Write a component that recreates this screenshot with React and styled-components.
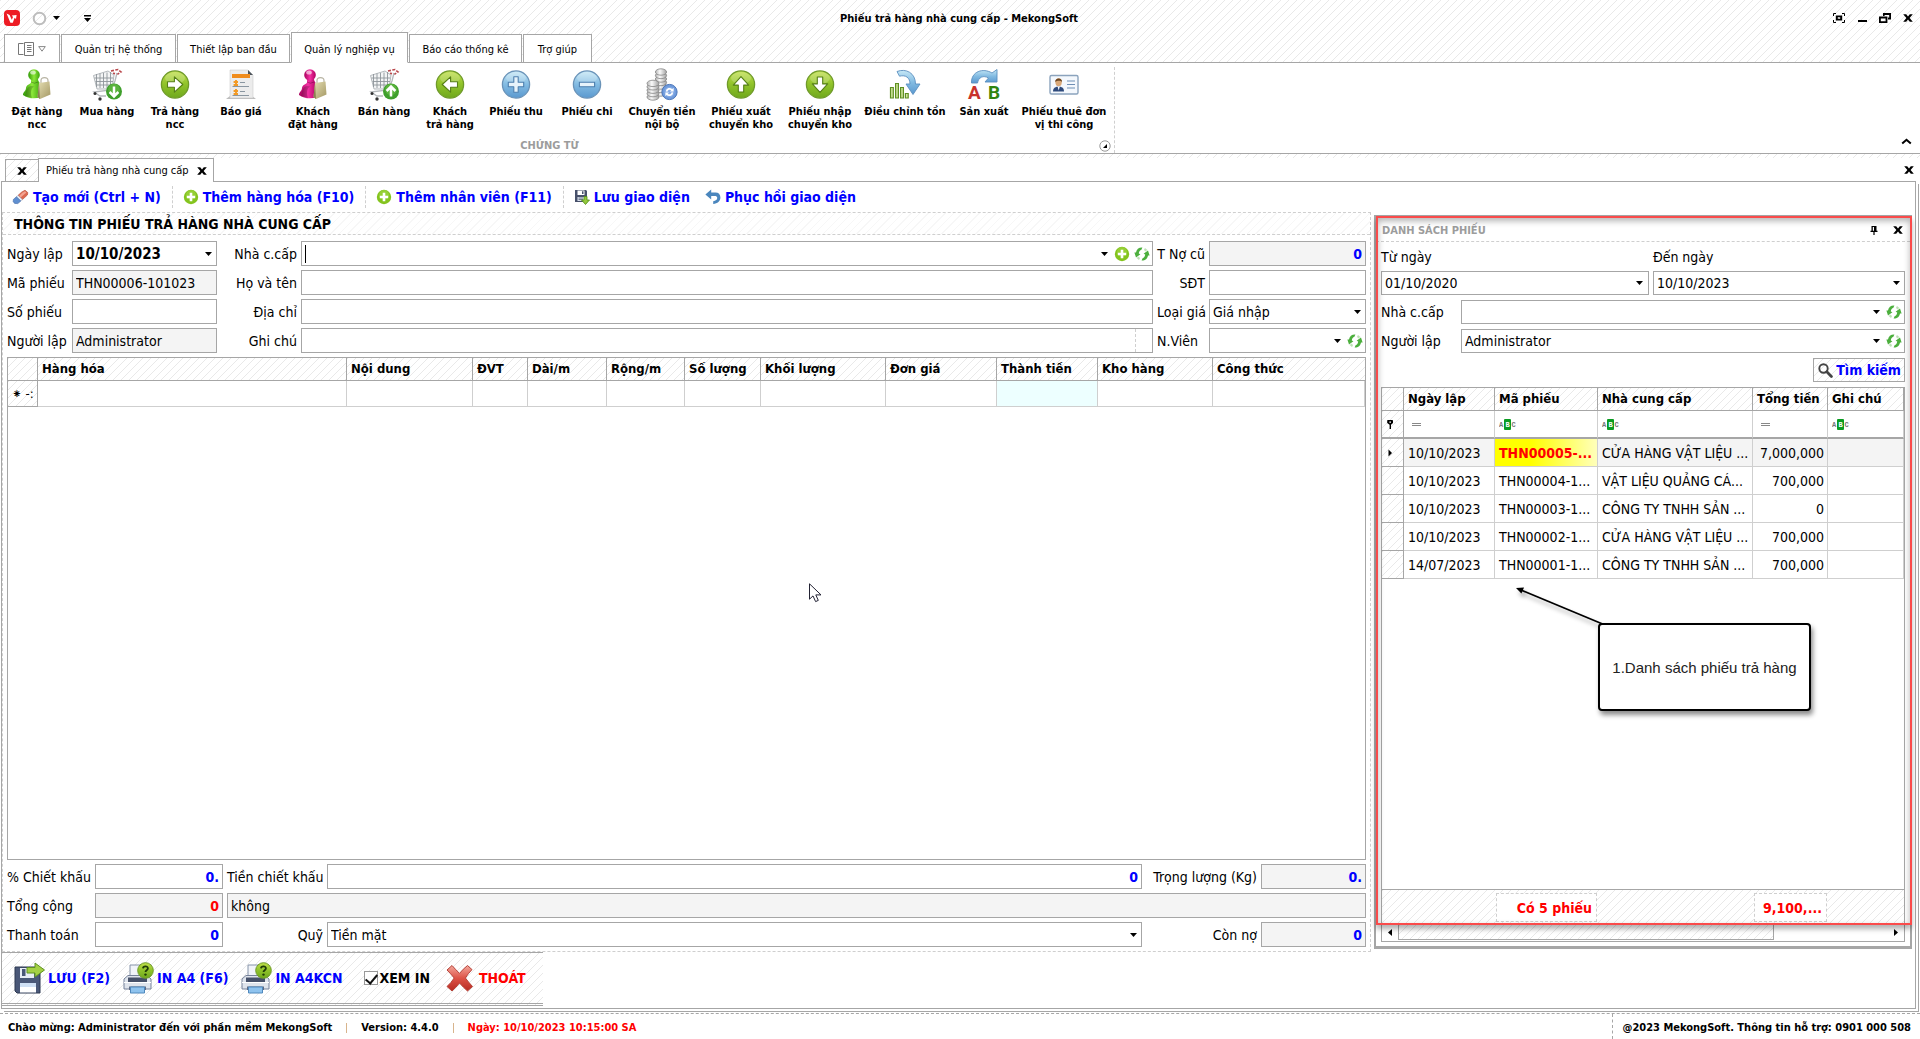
import React from 'react';
import styled, { createGlobalStyle, css } from 'styled-components';

const line = '#a6a6a6';
const soft = '#cfcfcf';
const sans = '"DejaVu Sans Condensed", "Noto Sans", sans-serif';

const hatch = css`
  background-color: #fff;
  background-image: linear-gradient(
    135deg,
    #e9e9e9 0 6.25%,
    transparent 6.25% 50%,
    #e9e9e9 50% 56.25%,
    transparent 56.25%
  );
  background-size: 8px 8px;
`;

const Global = createGlobalStyle`
  * { box-sizing: border-box; }
  body { margin: 0; background: #fff; font-family: ${sans}; font-size: 14px; color: #000; }
  button, input, select { font: inherit; color: inherit; margin: 0; }
  button { background: none; border: 0; padding: 0; cursor: pointer; }
  h1, h2 { margin: 0; }
`;

/* ---------- shell ---------- */

const Page = styled.div`
  min-height: 100vh;
  display: flex;
  flex-direction: column;
`;

const Top = styled.header`
  ${hatch}
  height: 63px;
  display: flex;
  flex-direction: column;
  justify-content: space-between;
  border-bottom: 1px solid ${line};
`;

const TitleBar = styled.div`
  display: grid;
  grid-template-columns: 1fr auto 1fr;
  align-items: center;
  height: 32px;
  padding: 4px 6px 0 4px;
`;

const AppTitle = styled.h1`
  font-size: 11px;
  font-weight: 700;
`;

const QuickBar = styled.div`
  display: flex;
  align-items: center;
  gap: 4px;
`;

const QuickMore = styled.button`
  margin-left: 20px;
  display: flex;
`;

const Round = styled.button`
  display: flex;
  align-items: center;
  gap: 6px;
  margin-left: 8px;
`;

const WindowButtons = styled.div`
  display: flex;
  justify-content: flex-end;
  gap: 11px;
  button { display: flex; }
`;

const Tabs = styled.nav`
  display: flex;
  align-items: flex-end;
  gap: 1px;
  padding-left: 4px;
  margin-bottom: -1px;
`;

const Tab = styled.button`
  height: ${(p) => (p.$active ? 31 : 29)}px;
  width: ${(p) => p.$w}px;
  padding-top: ${(p) => (p.$active ? 3 : 1)}px;
  border: 1px solid ${line};
  border-bottom-color: ${(p) => (p.$active ? '#fff' : line)};
  background: #fff;
  font-size: 11px;
  white-space: nowrap;
  display: flex;
  align-items: center;
  justify-content: center;
  gap: 3px;
`;

const Ribbon = styled.section`
  height: 91px;
  display: flex;
  justify-content: space-between;
  align-items: stretch;
  border-bottom: 1px solid ${line};
`;

const RibbonGroup = styled.div`
  width: 1115px;
  display: flex;
  flex-direction: column;
  justify-content: space-between;
  border-right: 1px dashed ${soft};
  margin-top: 4px;
`;

const RibbonItems = styled.div`
  display: flex;
  padding-left: 2px;
`;

const RibbonButton = styled.button`
  width: ${(p) => p.$w}px;
  display: flex;
  flex-direction: column;
  align-items: center;
  font-size: 11px;
  font-weight: 700;
  line-height: 13px;
  white-space: pre;
  gap: 4px;
  svg { width: 32px; height: 34px; overflow: visible; }
`;

const GroupFoot = styled.div`
  display: flex;
  align-items: center;
  padding: 0 3px 1px 0;
  font-size: 11px;
  font-weight: 700;
  color: #9c9c9c;
  span { flex: 1; text-align: center; }
  button { display: flex; }
`;

const Collapse = styled.button`
  align-self: flex-end;
  padding: 0 8px 8px;
  display: flex;
`;

const Strip = styled.div`
  ${hatch}
  height: 4px;
`;

const DocTabs = styled.div`
  display: flex;
  align-items: flex-end;
  height: 23px;
  padding: 0 5px;
`;

const DocTab = styled.div`
  ${(p) => p.$plain && hatch}
  height: ${(p) => (p.$plain ? 22 : 24)}px;
  display: flex;
  align-items: center;
  gap: 7px;
  padding: 0 ${(p) => (p.$plain ? 10 : 5)}px 0 ${(p) => (p.$plain ? 10 : 7)}px;
  border: 1px solid ${line};
  border-bottom: 0;
  font-size: 11px;
  background-color: #fff;
  z-index: 1;
  margin-bottom: ${(p) => (p.$plain ? 0 : -1)}px;
  & + & { margin-left: -1px; }
  button { display: flex; }
`;

const DocClose = styled.button`
  margin: 0 0 6px auto;
  display: flex;
`;

const Frame = styled.main`
  flex: 1;
  display: flex;
  flex-direction: column;
  margin: 0 4px 4px 1px;
  border: 1px solid ${line};
  padding-bottom: 2px;
  box-shadow: 2px 2px 0 #fff, 3px 3px 0 ${line};
`;

const Toolbar = styled.div`
  height: 30px;
  display: flex;
  align-items: center;
`;

const ToolButton = styled.button`
  display: flex;
  align-items: center;
  gap: 4px;
  height: 22px;
  padding: 0 ${(p) => (p.$sep ? 11 : 5)}px 0 10px;
  color: #00f;
  font-weight: 700;
  white-space: nowrap;
  border-right: ${(p) => (p.$sep ? `1px dashed ${soft}` : '0')};
`;

const Columns = styled.div`
  flex: 1;
  display: flex;
`;

/* ---------- voucher form ---------- */

const Voucher = styled.section`
  flex: 1;
  min-width: 0;
  display: flex;
  flex-direction: column;
  border: 1px dashed ${soft};
`;

const VoucherTitle = styled.h2`
  height: 22px;
  padding-left: 11px;
  font-size: 14px;
  line-height: 22px;
  font-weight: 700;
  border-bottom: 1px dashed ${soft};
  background: repeating-linear-gradient(135deg, #f7f7f7 0 1px, #fff 1px 6px);
`;

const VoucherBody = styled.div`
  flex: 1;
  display: flex;
  flex-direction: column;
  gap: 4px;
  padding: 6px 4px 4px;
`;

const FormGrid = styled.div`
  display: grid;
  grid-template-columns: 61px 145px 76px 1fr 48px 157px;
  gap: 4px;
`;

const TotalsGrid = styled.div`
  display: grid;
  grid-template-columns: 84px 128px 96px 1fr 111px 105px;
  gap: 4px;
`;

const Label = styled.label`
  align-self: center;
  line-height: 18px;
  white-space: nowrap;
  text-align: ${(p) => (p.$right ? 'right' : 'left')};
`;

const Box = styled.div`
  position: relative;
  display: flex;
  align-items: center;
  height: ${(p) => (p.$low ? 24 : 25)}px;
  min-width: 0;
  border: 1px solid ${line};
  background: ${(p) => (p.$off ? '#f4f4f4' : '#fff')};
  grid-column: ${(p) => (p.$wide ? 'span 4' : 'auto')};
  button { display: flex; margin-right: 4px; }
  button:last-child { margin-right: 2px; }
`;

const Input = styled.input`
  flex: 1;
  width: 0;
  min-width: 0;
  height: 100%;
  border: 0;
  padding: 0 3px;
  outline: 0;
  background: transparent;
  line-height: 18px;
  font-size: ${(p) => (p.$big ? 15 : 14)}px;
  font-weight: ${(p) => (p.$bold ? 700 : 400)};
  color: ${(p) => p.$color || '#000'};
  text-align: ${(p) => (p.$num ? 'right' : 'left')};
`;

const Select = styled.select`
  flex: 1;
  width: 0;
  height: 100%;
  border: 0;
  outline: 0;
  padding: 0 3px;
  background: transparent;
  appearance: none;
`;

const Drop = styled.span`
  display: flex;
  width: 16px;
  justify-content: center;
  pointer-events: none;
  &:not(:last-child) { width: 20px; }
`;

const TextCaret = styled.span`
  width: 1px;
  height: 18px;
  margin-left: 3px;
  background: #000;
`;

const SideRule = styled.span`
  align-self: stretch;
  width: 17px;
  border-left: 1px dashed ${soft};
`;

/* ---------- tables ---------- */

const Sheet = styled.div`
  position: relative;
  flex: 1;
  display: flex;
  flex-direction: column;
  border: 1px solid ${line};
  background: #fff;
`;

const Table = styled.table`
  width: 100%;
  table-layout: fixed;
  border-collapse: separate;
  border-spacing: 0;
`;

const Th = styled.th`
  ${hatch}
  height: 23px;
  padding: 0 0 0 4px;
  text-align: left;
  font-size: 13px;
  font-weight: 700;
  line-height: 18px;
  white-space: nowrap;
  overflow: hidden;
  border-right: 1px solid ${line};
  border-bottom: 1px solid ${line};
  &:last-child { border-right: ${(p) => (p.$end ? `1px solid ${line}` : '0')}; }
`;

const RowHead = styled.th`
  ${hatch}
  padding: 0 0 0 4px;
  font-size: 13px;
  font-weight: 400;
  text-align: left;
  white-space: nowrap;
  overflow: hidden;
  border-right: 1px solid ${line};
  border-bottom: ${(p) => (p.$heavy ? 2 : 1)}px solid ${line};
`;

const Td = styled.td`
  height: ${(p) => p.$h || 28}px;
  padding: 0 3px 0 4px;
  overflow: hidden;
  white-space: nowrap;
  text-align: ${(p) => (p.$num ? 'right' : 'left')};
  border-right: 1px solid ${soft};
  border-bottom: ${(p) => (p.$heavy ? `2px solid ${line}` : `1px solid ${soft}`)};
  background: ${(p) => p.$bg || 'transparent'};
  color: ${(p) => (p.$hot ? '#f00' : '#000')};
  font-weight: ${(p) => (p.$hot ? 700 : 400)};
  svg { display: block; }
`;

const Pointer = styled.svg`
  position: absolute;
  left: 59%;
  top: 225px;
`;

/* ---------- bottom actions ---------- */

const Actions = styled.div`
  ${hatch}
  width: 541px;
  height: 54px;
  display: flex;
  align-items: center;
  padding: 0 0 0 11px;
  font-weight: 700;
  border-top: 1px solid ${line};
  border-bottom: 3px double ${line};
`;

const ActionButton = styled.button`
  display: flex;
  align-items: center;
  gap: 3px;
  padding-right: 12px;
  font-weight: 700;
  white-space: nowrap;
  color: ${(p) => p.$color || '#00f'};
  svg { width: 32px; height: 32px; }
`;

const Check = styled.label`
  display: flex;
  align-items: center;
  gap: 1px;
  padding: 0 14px 0 10px;
  white-space: nowrap;
`;

const Tick = styled.input`
  appearance: none;
  flex: none;
  width: 14px;
  height: 14px;
  margin: 0;
  border: 1px solid #999;
  background: #fff;
  display: grid;
  place-items: center;
  &:checked::before {
    content: '';
    width: 5px;
    height: 10px;
    border: solid #111;
    border-width: 0 2px 2px 0;
    transform: rotate(40deg);
  }
`;

/* ---------- voucher list ---------- */

const Panel = styled.aside`
  position: relative;
  width: 538px;
  flex: none;
  display: flex;
  flex-direction: column;
  margin: 3px;
  border: solid ${line};
  border-width: 1px 2px 3px 2px;
`;

const Highlight = styled.div`
  position: absolute;
  inset: 0 -2px 21px 0;
  border: 2px solid #fa4b4b;
  box-shadow: inset 0 3px 6px rgba(0, 0, 0, 0.3), 0 4px 5px rgba(0, 0, 0, 0.3);
  pointer-events: none;
`;

const PanelHead = styled.div`
  height: 26px;
  display: flex;
  align-items: center;
  padding: 3px 6px 0 6px;
  border-bottom: 1px dashed ${soft};
  h2 { flex: 1; font-size: 11px; color: #9c9c9c; }
  button { display: flex; margin-left: 14px; }
`;

const PanelBody = styled.div`
  flex: 1;
  display: flex;
  flex-direction: column;
  gap: 5px;
  padding: 0 5px 4px;
`;

const Dates = styled.div`
  display: grid;
  grid-template-columns: 17fr 16fr;
  column-gap: 4px;
  label { height: 29px; line-height: 31px; }
`;

const FilterLine = styled.div`
  display: grid;
  grid-template-columns: 80px 1fr;
`;

const SearchButton = styled.button`
  ${hatch}
  align-self: flex-end;
  display: flex;
  align-items: center;
  gap: 3px;
  height: 24px;
  padding: 0 3px 0 4px;
  border: 1px solid ${line};
  color: #00f;
  font-weight: 700;
`;

const SheetSpace = styled.div`
  flex: 1;
`;

const Summary = styled.div`
  ${hatch}
  height: 35px;
  display: grid;
  grid-template-columns: 114px 101px 157px 73px;
  align-items: center;
  border-top: 1px solid ${line};
  color: #f00;
  font-weight: 700;
`;

const SumCell = styled.div`
  grid-column: ${(p) => p.$col};
  height: 29px;
  line-height: 29px;
  padding-right: 4px;
  text-align: right;
  white-space: nowrap;
  background: #fff;
  border: 1px dashed ${soft};
`;

const Scroll = styled.div`
  height: 17px;
  display: flex;
  align-items: center;
  padding: 0 4px;
  gap: 4px;
  button { display: flex; width: 8px; justify-content: center; }
`;

const Thumb = styled.div`
  ${hatch}
  flex: 0 0 376px;
  height: 15px;
  margin-right: auto;
  border: 1px solid ${line};
  border-top: 0;
`;

const Callout = styled.div`
  position: absolute;
  left: 216px;
  top: 235px;
  width: 213px;
  height: 88px;
  display: grid;
  place-items: center;
  border: 2px solid #000;
  border-radius: 4px;
  background: #fff;
  font: 15px 'Liberation Sans', Arial, sans-serif;
  color: #222;
  white-space: nowrap;
  box-shadow: 2px 4px 5px rgba(0, 0, 0, 0.45);
`;

const CalloutArrow = styled.svg`
  position: absolute;
  left: 133px;
  top: 197px;
  filter: drop-shadow(2px 4px 2px rgba(0, 0, 0, 0.35));
`;

const Status = styled.footer`
  height: 26px;
  display: flex;
  justify-content: space-between;
  border-top: 1px dashed ${line};
  font-size: 11px;
  font-weight: 700;
  line-height: 28px;
  white-space: nowrap;
`;

const StatusLeft = styled.div`
  display: flex;
  padding-left: 8px;
  gap: 14px;
`;

const Bar = styled.span`
  width: 1px;
  height: 10px;
  margin-top: 9px;
  background: #d8b48c;
`;

const Red = styled.span`
  color: #f00;
`;

const StatusRight = styled.div`
  padding: 0 9px 0 10px;
  border-left: 1px dashed ${line};
`;

/* ---------- drawings ---------- */

const Down = () => (
  <svg width="7" height="4" viewBox="0 0 7 4" aria-hidden="true"><path d="M0 0H7L3.5 4Z" /></svg>
);
const Cross = () => (
  <svg width="12" height="10" viewBox="0 0 12 10" aria-hidden="true">
    <path d="M1.2 1.2H4.2L6 3.5 7.8 1.2H10.8L7.6 5 10.8 8.8H7.8L6 6.5 4.2 8.8H1.2L4.4 5Z" />
  </svg>
);
const Refresh = () => (
  <svg width="16" height="16" viewBox="0 0 16 16" aria-hidden="true" fill="#4caf3d">
    <path d="M8.4 1.6C5 1.4 2.4 3.4 2 6.6L.4 6.4 2 11.6 6.4 8.2 4.8 7.4C5 5.4 6 4.2 7.4 3.8Z" />
    <path d="M7.6 14.4C11 14.6 13.6 12.6 14 9.4L15.6 9.6 14 4.4 9.6 7.8 11.2 8.6C11 10.6 10 11.8 8.6 12.2Z" />
    <path d="M2.6 12L4.8 10.6 6 12.2 5 14ZM13.4 4L11.2 5.4 10 3.8 11 2Z" fill="#7cc46c" opacity=".5" />
  </svg>
);
const Plus = () => (
  <svg width="16" height="16" viewBox="0 0 16 16" aria-hidden="true">
    <circle cx="8" cy="8" r="7.2" fill="#84c41e" />
    <circle cx="8" cy="6" r="5" fill="#a5d94a" opacity=".5" />
    <path d="M8 3.8V12.2M3.8 8H12.2" stroke="#fff" strokeWidth="2.6" />
  </svg>
);
const Eraser = () => (
  <svg width="17" height="16" viewBox="0 0 17 16" aria-hidden="true">
    <path d="M9.5 3.2L13 1.2 15.8 3.6 15.4 6 10.4 10.6 6 6.4Z" fill="#dd6a50" stroke="#b4452f" strokeWidth=".6" />
    <path d="M6 6.4L10.4 10.6 8.8 12 4.4 7.8Z" fill="#eef2f8" stroke="#8a9ab5" strokeWidth=".5" />
    <path d="M4.4 7.8L8.8 12 5.8 14.6 2.6 14.4 1.2 12.6 1.4 10.4Z" fill="#5f8fd0" stroke="#3f66a5" strokeWidth=".6" />
    <path d="M10.4 3.8L13 2.2 14.4 3.4 8.6 8.4 7.2 6.8Z" fill="#f9b8a8" opacity=".75" />
  </svg>
);
const SaveLayout = () => (
  <svg width="16" height="16" viewBox="0 0 16 16" aria-hidden="true">
    <path d="M1 1H12L13 2V13H1Z" fill="#47506a" />
    <path d="M3.5 1.5H10.5V6H3.5Z" fill="#fff" />
    <path d="M8 2.3H9.5V5H8Z" fill="#47506a" />
    <path d="M3.5 8H10V12H3.5Z" fill="#dfe6f2" />
    <path d="M4.5 9H9M4.5 10.6H9" stroke="#47506a" strokeWidth=".8" />
    <path d="M10 7.5H13V11H15.5L11.5 15.5 7.5 11H10Z" fill="#93c83d" stroke="#4f8b14" strokeWidth=".8" />
  </svg>
);
const Undo = () => (
  <svg width="16" height="16" viewBox="0 0 16 16" aria-hidden="true">
    <path d="M6.2 .4V3.6H10.5C13.6 3.6 15.4 5.6 15.4 8.5 15.4 12 12.6 14.6 8.2 15V12.2C10.8 11.9 12.2 10.6 12.2 9 12.2 7.6 11.2 7 9.6 7H6.2V10.4L.4 5.4Z" fill="#4a86bd" />
  </svg>
);
const Magnifier = () => (
  <svg width="15" height="15" viewBox="0 0 15 15" aria-hidden="true" fill="none" stroke="#444">
    <circle cx="5.5" cy="5.5" r="4.2" strokeWidth="1.9" />
    <path d="M8.8 8.8L13.4 13.4" strokeWidth="2.8" strokeLinecap="round" />
  </svg>
);

const Defs = () => (
  <svg width="0" height="0" aria-hidden="true" display="block">
    <defs>
      <linearGradient id="green" x1="0" y1="0" x2="0" y2="1">
        <stop offset="0" stopColor="#c0df4a" /><stop offset=".5" stopColor="#8fc22a" /><stop offset="1" stopColor="#6fa81c" />
      </linearGradient>
      <linearGradient id="blue" x1="0" y1="0" x2="0" y2="1">
        <stop offset="0" stopColor="#c6e8f6" /><stop offset=".5" stopColor="#82bbe2" /><stop offset="1" stopColor="#5a98cf" />
      </linearGradient>
      <linearGradient id="red" x1="0" y1="0" x2="0" y2="1">
        <stop offset="0" stopColor="#f3a79c" /><stop offset=".5" stopColor="#dd5347" /><stop offset="1" stopColor="#b72b22" />
      </linearGradient>
      <linearGradient id="lime" x1="0" y1="0" x2="1" y2="0">
        <stop offset="0" stopColor="#2f9a05" /><stop offset=".5" stopColor="#8de83a" /><stop offset="1" stopColor="#3da30c" />
      </linearGradient>
      <linearGradient id="pink" x1="0" y1="0" x2="1" y2="0">
        <stop offset="0" stopColor="#a8005c" /><stop offset=".5" stopColor="#f531a4" /><stop offset="1" stopColor="#b00060" />
      </linearGradient>
      <linearGradient id="steel" x1="0" y1="0" x2="1" y2="0">
        <stop offset="0" stopColor="#b4b4b4" /><stop offset=".4" stopColor="#fafafa" /><stop offset="1" stopColor="#a0a0a0" />
      </linearGradient>
      <linearGradient id="bag" x1="0" y1="0" x2="1" y2="1">
        <stop offset="0" stopColor="#e6dfb4" /><stop offset="1" stopColor="#a39763" />
      </linearGradient>
    </defs>
  </svg>
);

const I = ({ children }) => <svg viewBox="0 0 32 34" aria-hidden="true">{children}</svg>;

const Person = ({ fill }) => (
  <I>
    <path d="M10 12H17C17 15 20 16 20 20V30C14 32.4 7 31.5 2 28 2 25 5 24 5 21 5.4 18 9 17.4 10 15.6Z" fill={`url(#${fill})`} />
    <circle cx="13" cy="8" r="5.8" fill={`url(#${fill})`} />
    <path d="M5 24C6 20 10 18 13 19.6 10 21.4 9 26 11 31L4 29Z" fill="#000" opacity=".2" />
    <ellipse cx="12" cy="5.6" rx="2.8" ry="2" fill="#fff" opacity=".6" />
    <path d="M10 15Q13.5 17.4 17 15" fill="none" stroke="#000" opacity=".25" />
    <path d="M20 16V13.5C20 9.6 27 9.6 27 13.5V16" fill="none" stroke="#b8b4a4" strokeWidth="1.2" />
    <path d="M18 16L28.5 14.4 29.5 27.5 19 32 16.5 30Z" fill="url(#bag)" />
    <path d="M18 16L19 32 16.5 30Z" fill="#8b8152" />
  </I>
);
const Cart = ({ up }) => (
  <I>
    <path d="M20 4L27 2.5 30 5 27 7 22 6.4" fill="none" stroke="#b9474b" strokeWidth="1.6" strokeDasharray="3 1.4" />
    <path d="M2.5 8.5L17 4 23 8 21 22H6Z" fill="#f3f4f5" stroke="#b4b9bd" />
    <path d="M5.5 7V20M9 6.5V21M12.5 6V21M16 5.5V21M19.5 5V21M3.5 11H22M4.5 14.5H22M5.5 18H21.5" stroke="#8e959b" strokeWidth=".9" />
    <path d="M26 6L24 14 20 23 3 25 9 29H15" fill="none" stroke="#b4b8bb" strokeWidth="1.3" />
    <circle cx="4" cy="26.4" r="1.5" fill="#333" /><circle cx="9" cy="32" r="1.7" fill="#333" />
    <circle cx="23" cy="24.5" r="8" fill="#3f9f2c" /><circle cx="23" cy="22.5" r="5.8" fill="#7ccb52" opacity=".45" />
    <path d={up ? 'M23 29.5V20M18.6 24L23 19.6 27.4 24' : 'M23 19.5V29M18.6 25L23 29.4 27.4 25'} fill="none" stroke="#fff" strokeWidth="2.5" />
  </I>
);
const Disc = ({ fill, rotate = 0, kind = 'arrow' }) => (
  <I>
    <circle cx="16" cy="17.5" r="13.6" fill={`url(#${fill})`} stroke={fill === 'blue' ? '#6a93b8' : '#6f9a2a'} strokeWidth="1.3" />
    <ellipse cx="16" cy="11" rx="10" ry="6" fill="#fff" opacity=".2" />
    <g fill={kind === 'arrow' ? '#fff' : '#e6f3fb'} stroke={fill === 'blue' ? '#4d7fae' : '#557f16'} strokeWidth="1.1" strokeLinejoin="round" transform={`rotate(${rotate} 16 17.5)`}>
      {kind === 'arrow' && <path d="M8.5 14.8H15.4V9.8L23.8 17.5 15.4 25.2V20.2H8.5Z" />}
      {kind === 'plus' && <path d="M13.8 9.8H18.2V15.3H23.7V19.7H18.2V25.2H13.8V19.7H8.3V15.3H13.8Z" />}
      {kind === 'minus' && <path d="M8.4 15.3H23.6V19.7H8.4Z" />}
    </g>
  </I>
);
const Quote = () => (
  <I>
    <path d="M1 32H31L27 29H5Z" fill="#bdbdbd" />
    <path d="M5 3H23L28 8V31H5Z" fill="#ececec" stroke="#cfcfcf" strokeWidth=".6" />
    <path d="M23 3L28 8H23Z" fill="#4d545b" />
    <rect x="7" y="7" width="18" height="4" fill="#f08c1c" />
    <path d="M11 13V20M8.6 15H13M8.6 18H13M11 22V29M8.6 24H13M8.6 27H13" stroke="#f39a24" strokeWidth="1.9" />
    <path d="M15 15.5H20M7.5 19.5H24M15 24.5H20M7.5 28.5H24" stroke="#8a96a0" strokeWidth="1" />
  </I>
);
const Coins = () => (
  <I>
    {[26, 22.5, 19, 15.5, 12, 8.5, 5].map((y) => (
      <ellipse key={y} cx="15" cy={y} rx="5.6" ry="3.2" fill="url(#steel)" stroke="#858585" strokeWidth=".8" />
    ))}
    {[30, 26.6, 23.2, 19.8, 16.4].map((y) => (
      <ellipse key={y} cx="7" cy={y} rx="6" ry="3.2" fill="url(#steel)" stroke="#858585" strokeWidth=".8" />
    ))}
    <circle cx="23.5" cy="25" r="7.6" fill="#6f9bdc" stroke="#4a74b8" />
    <circle cx="23.5" cy="25" r="5.2" fill="#86abe4" />
    <path d="M20.6 24.6C20.8 21.8 24.4 20.8 26 23M26.4 25.4C26.2 28.2 22.6 29.2 21 27" fill="none" stroke="#fff" strokeWidth="1.7" />
    <path d="M27.6 20.8V24.4H24ZM19.4 29.2V25.6H23Z" fill="#fff" />
  </I>
);
const Adjust = () => (
  <I>
    <path d="M1.5 20.5H4.3V31H1.5ZM6.6 16.5H9.4V31H6.6ZM11.6 20.5H14.4V31H11.6ZM16.4 26.5H19.2V31H16.4Z" fill="#cfe59a" stroke="#5f8f22" strokeWidth="1.2" />
    <path d="M8 4.5C17 1 26.5 6 26.5 17H31L24 27.5 17 17H21C21 10.5 16.5 7.6 10.5 9.2Z" fill="url(#blue)" stroke="#5a8fc0" strokeWidth=".9" />
  </I>
);
const Letter = styled.text`
  font: 700 19px Roboto, sans-serif;
`;
const Produce = () => (
  <I>
    <path d="M3.5 16C3 4.5 15 .5 24 6L29 2.5V15H17L20.5 11C15.5 8 10.5 10 9.5 16Z" fill="url(#blue)" stroke="#5a8fc0" strokeWidth=".9" />
    <Letter x="0" y="32" fill="#c8322c">A</Letter>
    <Letter x="20" y="32" fill="#2f8410">B</Letter>
  </I>
);
const IdCard = () => (
  <I>
    <rect x="2" y="8.5" width="28" height="18.5" rx="1.5" fill="#f4f8fd" stroke="#8ba3bd" strokeWidth="1.4" />
    <path d="M5 24.5C5 20.5 8 19.8 10.5 19.5 13.5 19.8 16 20.5 16 24.5Z" fill="#2e4a7c" />
    <path d="M9.6 19.5H11.8L10.7 23.6Z" fill="#fff" />
    <ellipse cx="10.6" cy="15.2" rx="3.2" ry="3.9" fill="#d9a878" />
    <path d="M7.2 15C6.6 10.4 14.6 10 14 15 13 13.4 9.4 13 7.2 15Z" fill="#6b4520" />
    <path d="M19 14H27M19 17.5H27M19 21H27" stroke="#6f8fb5" strokeWidth="1.2" />
  </I>
);

const Floppy = () => (
  <svg viewBox="0 0 32 32" aria-hidden="true">
    <path d="M2 5H25L27 7V31H4L2 29Z" fill="#4a5878" stroke="#2d3850" />
    <rect x="7" y="6" width="14" height="10" fill="#e8edf5" />
    <rect x="9" y="7" width="3.5" height="7" fill="#4a5878" />
    <rect x="7" y="21" width="16" height="9.5" fill="#fff" /><rect x="7" y="21" width="16" height="4" fill="#cfe0f4" />
    <path d="M14 5.5H22V1L31.5 8 22 15V11H14Z" fill="#a4d044" stroke="#5f9120" />
  </svg>
);
const Printer = () => (
  <svg viewBox="0 0 32 32" aria-hidden="true">
    <path d="M8 3H21L23 5V18H8Z" fill="#f1f4f9" stroke="#8592a8" />
    <path d="M2 17L6 13.5H25L29 17V27H2Z" fill="#dfe4ec" stroke="#76829a" />
    <path d="M6 15.5H25V20H6Z" fill="#46516a" />
    <path d="M2 20.5H29" stroke="#fff" />
    <path d="M7 24.5H24V28H7Z" fill="#5c6a84" />
    <path d="M8.5 25H22.5V31H8.5Z" fill="#8fc3ee" stroke="#4f88bd" />
    <circle cx="23.5" cy="8.5" r="7.8" fill="url(#green)" stroke="#6f9a2a" />
    <path d="M21 6.4C21.2 3.6 26 3.8 25.9 6.4 25.8 8.2 23.5 8.2 23.5 10" fill="none" stroke="#1f3a08" strokeWidth="1.8" />
    <circle cx="23.5" cy="12.6" r="1.2" fill="#1f3a08" />
  </svg>
);
const BigX = () => (
  <svg viewBox="0 0 32 32" aria-hidden="true">
    <path d="M8 3.5Q12 8 15.5 11.4 19 7 23.5 3.5L28 7.6Q24 11.6 21.4 16 24.6 20.4 28.5 24.5L23.5 29Q19 25 15.5 21 12 25.4 8 29L3 24.5Q7 21 10.2 16 6.6 11.6 3 8Z" fill="url(#red)" stroke="#b64238" strokeLinejoin="round" />
  </svg>
);

const AbcText = styled.text`
  font: 700 7px 'Liberation Mono', monospace;
`;
const Abc = () => (
  <svg width="18" height="13" viewBox="0 0 18 13" role="img">
    <rect x="5" y="1" width="7" height="11" rx="1" fill="#0a9c22" />
    <AbcText x="0" y="9" fill="#777">A</AbcText>
    <AbcText x="6.4" y="9" fill="#fff">B</AbcText>
    <AbcText x="12.6" y="9" fill="#777">C</AbcText>
  </svg>
);
const Equal = () => (
  <svg width="16" height="12" viewBox="0 0 16 12" aria-hidden="true"><path d="M4 5.5H13M4 7.5H13" stroke="#888" /></svg>
);

/* ---------- data ---------- */

const ribbon = [
  ['Đặt hàng\nncc', 70, <Person fill="lime" />],
  ['Mua hàng', 70, <Cart />],
  ['Trả hàng\nncc', 66, <Disc fill="green" />],
  ['Báo giá', 66, <Quote />],
  ['Khách\nđặt hàng', 78, <Person fill="pink" />],
  ['Bán hàng', 64, <Cart up />],
  ['Khách\ntrả hàng', 68, <Disc fill="green" rotate={180} />],
  ['Phiếu thu', 64, <Disc fill="blue" kind="plus" />],
  ['Phiếu chi', 78, <Disc fill="blue" kind="minus" />],
  ['Chuyển tiền\nnội bộ', 72, <Coins />],
  ['Phiếu xuất\nchuyển kho', 86, <Disc fill="green" rotate={-90} />],
  ['Phiếu nhập\nchuyển kho', 72, <Disc fill="green" rotate={90} />],
  ['Điều chỉnh tồn', 98, <Adjust />],
  ['Sản xuất', 60, <Produce />],
  ['Phiếu thuê đơn\nvị thi công', 100, <IdCard />],
];

const goods = [
  ['Hàng hóa', 309], ['Nội dung', 126], ['ĐVT', 55], ['Dài/m', 79], ['Rộng/m', 78],
  ['Số lượng', 76], ['Khối lượng', 125], ['Đơn giá', 111], ['Thành tiền', 101], ['Kho hàng', 115], ['Công thức'],
];

const vouchers = [
  ['10/10/2023', 'THN00005-...', 'CỬA HÀNG VẬT LIỆU ...', '7,000,000'],
  ['10/10/2023', 'THN00004-1...', 'VẬT LIỆU QUẢNG CÁ...', '700,000'],
  ['10/10/2023', 'THN00003-1...', 'CÔNG TY TNHH SẢN ...', '0'],
  ['10/10/2023', 'THN00002-1...', 'CỬA HÀNG VẬT LIỆU ...', '700,000'],
  ['14/07/2023', 'THN00001-1...', 'CÔNG TY TNHH SẢN ...', '700,000'],
];

/* ---------- field helpers ---------- */

function TextField({ id, label, right, value = '', off, wide, before, after, ...rest }) {
  return (
    <>
      {label && <Label htmlFor={id} $right={right}>{label}</Label>}
      <Box $off={off} $wide={wide}>
        {before}
        <Input id={id} defaultValue={value} readOnly={off} aria-label={label ? undefined : 'Bằng chữ'} {...rest} />
        {after}
      </Box>
    </>
  );
}

function SelectField({ id, label, right, value = '', low, after }) {
  return (
    <>
      <Label htmlFor={id} $right={right}>{label}</Label>
      <Box $low={low}>
        <Select id={id} defaultValue={value}><option>{value}</option></Select>
        <Drop><Down /></Drop>
        {after}
      </Box>
    </>
  );
}

const RefreshButton = () => <button type="button" aria-label="Làm mới"><Refresh /></button>;

export default function App() {
  return (
    <Page>
      <Global />
      <Top>
        <TitleBar>
          <QuickBar>
            <svg width="16" height="16" viewBox="0 0 16 16" aria-hidden="true">
              <rect width="16" height="16" rx="4" fill="#ed1c24" />
              <path d="M2.6 3.4L5.6 5 7.8 9.8 9 7 7.8 5.6 12.6 5 12 9 10.6 7.8 8.8 12.8H6.4Z" fill="#fff" />
            </svg>
            <Round aria-label="Giao diện">
              <svg width="15" height="15" viewBox="0 0 15 15"><circle cx="7.5" cy="7.5" r="5.8" fill="none" stroke="#bdbdbd" strokeWidth="2" /></svg>
              <Down />
            </Round>
            <QuickMore aria-label="Tùy chỉnh">
              <svg width="7" height="7" viewBox="0 0 7 7"><path d="M0 0H7V1.4H0ZM0 3H7L3.5 7Z" /></svg>
            </QuickMore>
          </QuickBar>
          <AppTitle>Phiếu trả hàng nhà cung cấp - MekongSoft</AppTitle>
          <WindowButtons>
            <button aria-label="Toàn màn hình">
              <svg width="12" height="10" viewBox="0 0 12 10"><path d="M.5 3V.5H3M9 .5H11.5V3M11.5 7V9.5H9M3 9.5H.5V7" fill="none" stroke="#000" /><path d="M2.8 2.5H9.2V7.5H2.8ZM4.8 4.3V5.8H7.2V4.3Z" fillRule="evenodd" /></svg>
            </button>
            <button aria-label="Thu nhỏ"><svg width="12" height="10" viewBox="0 0 12 10"><path d="M2 7H11V9H2Z" /></svg></button>
            <button aria-label="Khôi phục">
              <svg width="12" height="10" viewBox="0 0 12 10"><path d="M4 0H12V6.5H9V4.5H10.2V2H5.6V3H4Z" /><path d="M0 3.5H8.4V10H0ZM1.8 5.6V8.2H6.6V5.6Z" fillRule="evenodd" /></svg>
            </button>
            <button aria-label="Đóng"><Cross /></button>
          </WindowButtons>
        </TitleBar>
        <Tabs>
          <Tab $w={56} aria-label="Trình đơn">
            <svg width="17" height="14" viewBox="0 0 17 14" fill="none" stroke="#777">
              <path d="M5.5 1.5H.5V12.5H5.5M6.5.5H15.5V13.5H6.5Z" /><path d="M9 3.5H13.5M9 5.5H13.5M9 7.5H13.5M9 9.5H13.5" />
            </svg>
            <svg width="8" height="6" viewBox="0 0 8 6"><path d="M.7.6H7.3L4 5.2Z" fill="none" stroke="#888" /></svg>
          </Tab>
          <Tab $w={115}>Quản trị hệ thống</Tab>
          <Tab $w={113}>Thiết lập ban đầu</Tab>
          <Tab $w={117} $active>Quản lý nghiệp vụ</Tab>
          <Tab $w={113}>Báo cáo thống kê</Tab>
          <Tab $w={69}>Trợ giúp</Tab>
        </Tabs>
      </Top>

      <Ribbon>
        <RibbonGroup>
          <RibbonItems>
            {ribbon.map(([text, w, icon]) => (
              <RibbonButton key={text} $w={w}>{icon}{text}</RibbonButton>
            ))}
          </RibbonItems>
          <GroupFoot>
            <span>CHỨNG TỪ</span>
            <button aria-label="Mở rộng">
              <svg width="12" height="12" viewBox="0 0 12 12"><circle cx="6" cy="6" r="5.2" fill="#fff" stroke="#999" /><path d="M8 4V8H4Z" /></svg>
            </button>
          </GroupFoot>
        </RibbonGroup>
        <Collapse aria-label="Thu gọn">
          <svg width="11" height="7" viewBox="0 0 11 7"><path d="M1.2 5.6L5.5 1.8 9.8 5.6" fill="none" stroke="#000" strokeWidth="2" /></svg>
        </Collapse>
      </Ribbon>
      <Strip />
      <DocTabs>
        <DocTab $plain><button aria-label="Đóng thẻ"><Cross /></button></DocTab>
        <DocTab>Phiếu trả hàng nhà cung cấp<button aria-label="Đóng phiếu"><Cross /></button></DocTab>
        <DocClose aria-label="Đóng tất cả"><Cross /></DocClose>
      </DocTabs>

      <Frame>
        <Toolbar>
          <ToolButton $sep><Eraser />Tạo mới (Ctrl + N)</ToolButton>
          <ToolButton $sep><Plus />Thêm hàng hóa (F10)</ToolButton>
          <ToolButton $sep><Plus />Thêm nhân viên (F11)</ToolButton>
          <ToolButton><SaveLayout />Lưu giao diện</ToolButton>
          <ToolButton><Undo />Phục hồi giao diện</ToolButton>
        </Toolbar>

        <Columns>
          <Voucher>
            <VoucherTitle>THÔNG TIN PHIẾU TRẢ HÀNG NHÀ CUNG CẤP</VoucherTitle>
            <VoucherBody>
              <FormGrid>
                <TextField id="date" label="Ngày lập" value="10/10/2023" $bold $big after={<Drop><Down /></Drop>} />
                <TextField
                  id="supplier" label="Nhà c.cấp" right before={<TextCaret />}
                  after={<><Drop><Down /></Drop><button aria-label="Thêm"><Plus /></button><RefreshButton /></>}
                />
                <TextField id="debt" label="T Nợ cũ" right value="0" off $num $bold $color="#00f" />
                <TextField id="code" label="Mã phiếu" value="THN00006-101023" off />
                <TextField id="name" label="Họ và tên" right />
                <TextField id="phone" label="SĐT" right />
                <TextField id="number" label="Số phiếu" />
                <TextField id="address" label="Địa chỉ" right />
                <SelectField id="price" label="Loại giá" right value="Giá nhập" />
                <TextField id="author" label="Người lập" value="Administrator" off />
                <TextField id="note" label="Ghi chú" right after={<SideRule />} />
                <SelectField id="staff" label="N.Viên" after={<RefreshButton />} />
              </FormGrid>

              <Sheet>
                <Table>
                  <colgroup>
                    <col width="30" />
                    {goods.map(([n, w]) => <col key={n} width={w} />)}
                  </colgroup>
                  <thead>
                    <tr><Th />{goods.map(([n]) => <Th key={n}>{n}</Th>)}</tr>
                  </thead>
                  <tbody>
                    <tr>
                      <RowHead>⁕ -:</RowHead>
                      {goods.map(([n]) => <Td key={n} $h={26} $bg={n === 'Thành tiền' ? '#edffff' : undefined} />)}
                    </tr>
                  </tbody>
                </Table>
                <Pointer width="13" height="20" viewBox="0 0 13 20" aria-hidden="true">
                  <path d="M.5 .8V16.2L4 12.9 6.6 18.6 9.3 17.4 6.8 11.9H12Z" fill="#fff" stroke="#223" />
                </Pointer>
              </Sheet>

              <TotalsGrid>
                <TextField id="pct" label="% Chiết khấu" value="0." $num $bold $color="#00f" />
                <TextField id="discount" label="Tiền chiết khấu" value="0" $num $bold $color="#00f" />
                <TextField id="weight" label="Trọng lượng (Kg)" right value="0." off $num $bold $color="#00f" />
                <TextField id="total" label="Tổng cộng" value="0" off $num $bold $color="#f00" />
                <TextField id="words" value="không" off wide />
                <TextField id="pay" label="Thanh toán" value="0" $num $bold $color="#00f" />
                <SelectField id="fund" label="Quỹ" right value="Tiền mặt" />
                <TextField id="left" label="Còn nợ" right value="0" off $num $bold $color="#00f" />
              </TotalsGrid>
            </VoucherBody>
          </Voucher>

          <Panel>
            <PanelHead>
              <h2>DANH SÁCH PHIẾU</h2>
              <button aria-label="Ghim"><svg width="8" height="10" viewBox="0 0 8 10"><path d="M1.5 1H6.5V5.8H7.5V7H4.6V10H3.4V7H.5V5.8H1.5ZM2.8 2V5.8H4V2Z" fillRule="evenodd" /></svg></button>
              <button aria-label="Đóng danh sách"><Cross /></button>
            </PanelHead>
            <PanelBody>
              <Dates>
                <Label htmlFor="from">Từ ngày</Label>
                <Label htmlFor="to">Đến ngày</Label>
                <Box $low><Input id="from" defaultValue="01/10/2020" /><Drop><Down /></Drop></Box>
                <Box $low><Input id="to" defaultValue="10/10/2023" /><Drop><Down /></Drop></Box>
              </Dates>
              <FilterLine><SelectField low id="fsup" label="Nhà c.cấp" after={<RefreshButton />} /></FilterLine>
              <FilterLine><SelectField low id="fauthor" label="Người lập" value="Administrator" after={<RefreshButton />} /></FilterLine>
              <SearchButton><Magnifier />Tìm kiếm</SearchButton>
              <Sheet>
                <Table>
                  <colgroup>
                    <col width="22" /><col width="91" /><col width="103" /><col width="155" /><col width="75" /><col />
                  </colgroup>
                  <thead>
                    <tr>
                      <Th /><Th>Ngày lập</Th><Th>Mã phiếu</Th><Th>Nhà cung cấp</Th><Th>Tổng tiền</Th><Th $end>Ghi chú</Th>
                    </tr>
                  </thead>
                  <tbody>
                    <tr>
                      <RowHead $heavy>
                        <svg width="8" height="9" viewBox="0 0 8 9" aria-hidden="true"><path d="M1.5 0H6.5L7 .8V3L5 4.8V9H3.6V4.8L1.2 3V.8ZM3.4 1.4V2.8H5V1.4Z" fillRule="evenodd" /></svg>
                      </RowHead>
                      <Td $heavy $h={28}><Equal /></Td><Td $heavy><Abc /></Td><Td $heavy><Abc /></Td>
                      <Td $heavy><Equal /></Td><Td $heavy><Abc /></Td>
                    </tr>
                    {vouchers.map(([date, code, name, sum], i) => (
                      <tr key={code}>
                        <RowHead>{i === 0 && <svg width="8" height="8" viewBox="0 0 8 8" aria-hidden="true"><path d="M2.5 0.5L6 4 2.5 7.5Z" /></svg>}</RowHead>
                        <Td $bg={i ? undefined : '#f4f4f4'}>{date}</Td>
                        <Td $hot={i === 0} $bg={i ? undefined : 'linear-gradient(90deg, #ff0 35%, #ffb)'}>{code}</Td>
                        <Td $bg={i ? undefined : '#f4f4f4'}>{name}</Td>
                        <Td $num $bg={i ? undefined : '#f4f4f4'}>{sum}</Td>
                        <Td $bg={i ? undefined : '#f4f4f4'} />
                      </tr>
                    ))}
                  </tbody>
                </Table>
                <SheetSpace />
                <Summary>
                  <SumCell $col={2}>Có 5 phiếu</SumCell>
                  <SumCell $col={4}>9,100,...</SumCell>
                </Summary>
                <Scroll>
                  <button aria-label="Cuộn trái"><svg width="4" height="7" viewBox="0 0 4 7"><path d="M4 0V7L0 3.5Z" /></svg></button>
                  <Thumb />
                  <button aria-label="Cuộn phải"><svg width="4" height="7" viewBox="0 0 4 7"><path d="M0 0V7L4 3.5Z" /></svg></button>
                </Scroll>
                <CalloutArrow width="96" height="44" viewBox="0 0 96 44" aria-hidden="true">
                  <path d="M6 5L90 40" stroke="#000" strokeWidth="1.8" /><path d="M1 3L9 2.4 6.4 8.6Z" />
                </CalloutArrow>
                <Callout>1.Danh sách phiếu trả hàng</Callout>
              </Sheet>
            </PanelBody>
            <Highlight />
          </Panel>
        </Columns>

        <Actions>
          <ActionButton><Floppy />LƯU (F2)</ActionButton>
          <ActionButton><Printer />IN A4 (F6)</ActionButton>
          <ActionButton><Printer />IN A4KCN</ActionButton>
          <Check><Tick type="checkbox" defaultChecked />XEM IN</Check>
          <ActionButton $color="#f00"><BigX />THOÁT</ActionButton>
        </Actions>
      </Frame>

      <Status>
        <StatusLeft>
          <span>Chào mừng: Administrator đến với phần mềm MekongSoft</span>
          <Bar />
          <span>Version: 4.4.0</span>
          <Bar />
          <Red>Ngày: 10/10/2023 10:15:00 SA</Red>
        </StatusLeft>
        <StatusRight>@2023 MekongSoft. Thông tin hỗ trợ: 0901 000 508</StatusRight>
      </Status>
      <Defs />
    </Page>
  );
}
